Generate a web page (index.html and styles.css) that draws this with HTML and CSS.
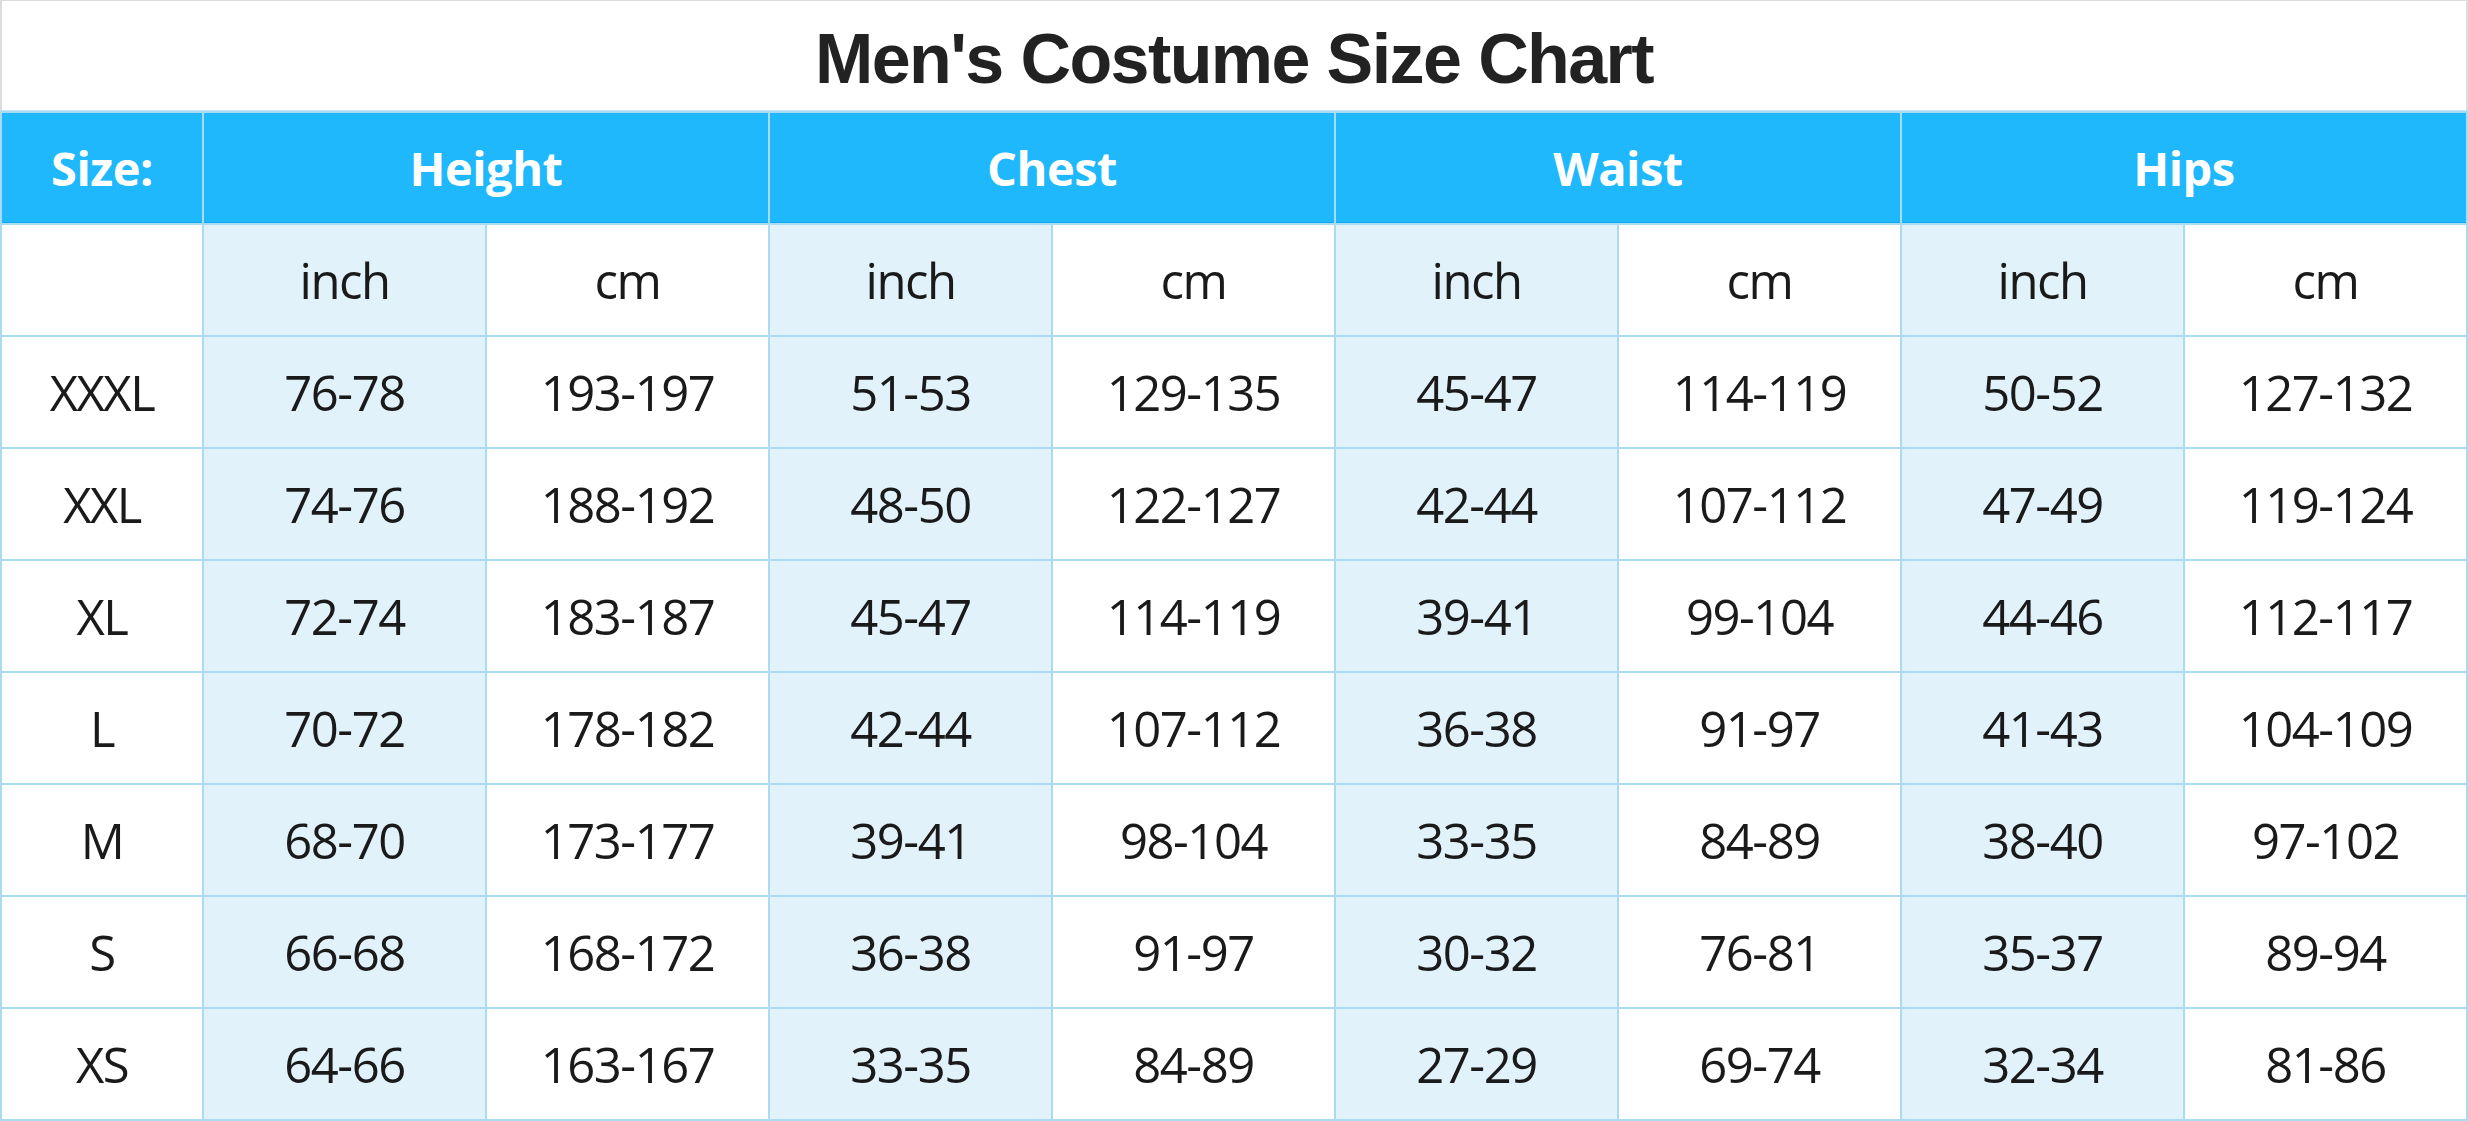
FILE: index.html
```html
<!DOCTYPE html>
<html>
<head>
<meta charset="utf-8">
<link rel="stylesheet" href="styles.css">
</head>
<body>
<div class="chart">
  <div class="title">Men's Costume Size Chart</div>
  <div class="grid">
    <div class="hd">Size:</div>
    <div class="hd span2">Height</div>
    <div class="hd span2">Chest</div>
    <div class="hd span2">Waist</div>
    <div class="hd span2">Hips</div>

    <div class="c"></div>
    <div class="c in">inch</div><div class="c">cm</div>
    <div class="c in">inch</div><div class="c">cm</div>
    <div class="c in">inch</div><div class="c">cm</div>
    <div class="c in">inch</div><div class="c">cm</div>

    <div class="c">XXXL</div>
    <div class="c in">76-78</div><div class="c">193-197</div>
    <div class="c in">51-53</div><div class="c">129-135</div>
    <div class="c in">45-47</div><div class="c">114-119</div>
    <div class="c in">50-52</div><div class="c">127-132</div>

    <div class="c">XXL</div>
    <div class="c in">74-76</div><div class="c">188-192</div>
    <div class="c in">48-50</div><div class="c">122-127</div>
    <div class="c in">42-44</div><div class="c">107-112</div>
    <div class="c in">47-49</div><div class="c">119-124</div>

    <div class="c">XL</div>
    <div class="c in">72-74</div><div class="c">183-187</div>
    <div class="c in">45-47</div><div class="c">114-119</div>
    <div class="c in">39-41</div><div class="c">99-104</div>
    <div class="c in">44-46</div><div class="c">112-117</div>

    <div class="c">L</div>
    <div class="c in">70-72</div><div class="c">178-182</div>
    <div class="c in">42-44</div><div class="c">107-112</div>
    <div class="c in">36-38</div><div class="c">91-97</div>
    <div class="c in">41-43</div><div class="c">104-109</div>

    <div class="c">M</div>
    <div class="c in">68-70</div><div class="c">173-177</div>
    <div class="c in">39-41</div><div class="c">98-104</div>
    <div class="c in">33-35</div><div class="c">84-89</div>
    <div class="c in">38-40</div><div class="c">97-102</div>

    <div class="c">S</div>
    <div class="c in">66-68</div><div class="c">168-172</div>
    <div class="c in">36-38</div><div class="c">91-97</div>
    <div class="c in">30-32</div><div class="c">76-81</div>
    <div class="c in">35-37</div><div class="c">89-94</div>

    <div class="c">XS</div>
    <div class="c in">64-66</div><div class="c">163-167</div>
    <div class="c in">33-35</div><div class="c">84-89</div>
    <div class="c in">27-29</div><div class="c">69-74</div>
    <div class="c in">32-34</div><div class="c">81-86</div>
  </div>
</div>
</body>
</html>
```

FILE: styles.css
```css
html, body {
  margin: 0;
  padding: 0;
  background: #ffffff;
}

.chart {
  width: 2468px;
  height: 1121px;
  display: flex;
  flex-direction: column;
  overflow: hidden;
}

.title {
  height: 110px;
  box-sizing: border-box;
  border-top: 1px solid #dcdcdc;
  border-left: 2px solid #dcdcdc;
  border-right: 2px solid #dcdcdc;
  display: flex;
  align-items: center;
  justify-content: center;
  padding-top: 6px;
  font-family: "Liberation Sans", Arial, sans-serif;
  font-weight: bold;
  font-size: 70px;
  letter-spacing: -1.6px;
  color: #222222;
}

.grid {
  display: grid;
  grid-template-columns: 200px repeat(8, 1fr);
  grid-auto-rows: 110px;
  gap: 2px;
  padding: 2px;
  background: #a9dbf3;
  border-top: 1px solid #c4e6f6;
}

.hd {
  background: #20b8fd;
  color: #ffffff;
  font-family: "Open Sans", "Noto Sans", sans-serif;
  font-weight: bold;
  font-size: 47px;
  letter-spacing: -0.5px;
  display: flex;
  align-items: center;
  justify-content: center;
  border-bottom: 1px solid #14a9ee;
}

.span2 {
  grid-column: span 2;
}

.c {
  background: #ffffff;
  color: #1a1a1a;
  font-family: "Open Sans", "Noto Sans", sans-serif;
  font-size: 49px;
  letter-spacing: -1.5px;
  display: flex;
  align-items: center;
  justify-content: center;
}

.in {
  background: #e1f2fb;
}
```
